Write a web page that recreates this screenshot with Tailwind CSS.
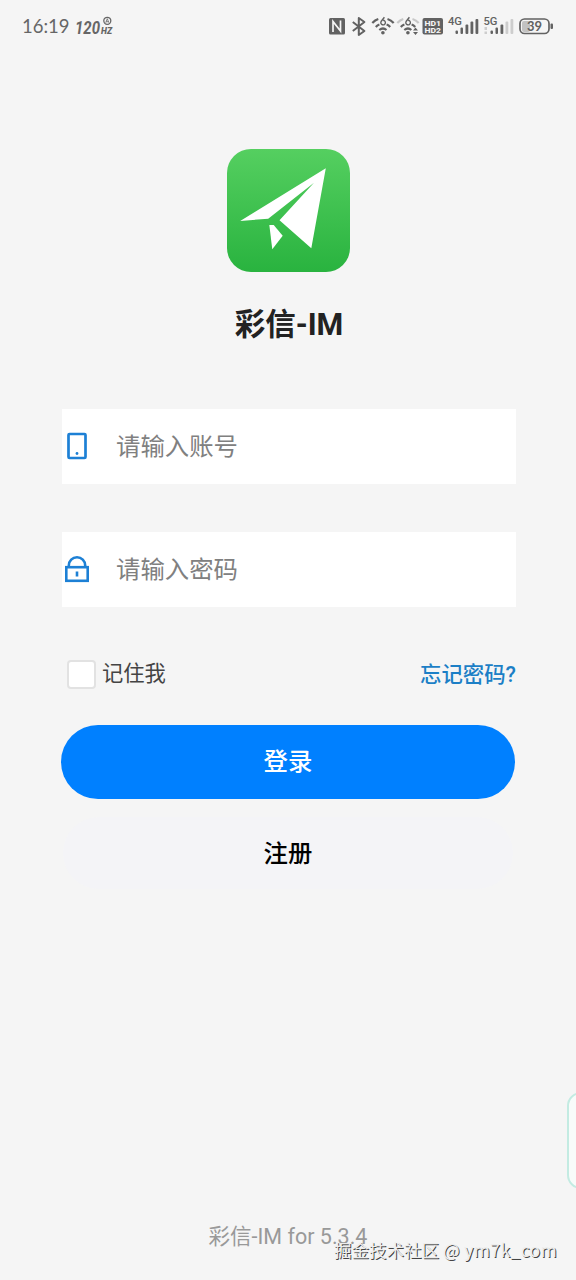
<!DOCTYPE html>
<html lang="zh-CN">
<head>
<meta charset="utf-8">
<meta name="viewport" content="width=device-width, initial-scale=1">
<title>彩信-IM</title>
<script src="https://cdn.jsdelivr.net/npm/@tailwindcss/browser@4"></script>
</head>
<body class="bg-[#f5f5f5]">
<div class="relative flex h-[1280px] w-[576px] flex-col overflow-hidden bg-[#f5f5f5] font-['Roboto','Noto_Sans_CJK_SC',sans-serif]">
  <!-- Status bar -->
  <header class="flex h-[52px] shrink-0 items-center justify-between pr-[22px] pl-[22px] text-[#666]">
    <div class="flex items-center gap-[6px]">
      <span class="w-[47px] font-['Lato',sans-serif] text-[18.500px] leading-none whitespace-nowrap">16:19</span>
      <svg class="h-[22px] w-[40px]" viewBox="0 0 40 22" fill="currentColor" font-family="Roboto, sans-serif">
        <text x="0" y="18.500" font-size="19" font-weight="700" font-style="italic" textLength="25" lengthAdjust="spacingAndGlyphs">120</text>
        <text x="26" y="18.500" font-size="9" font-weight="900" font-style="italic" textLength="11" lengthAdjust="spacingAndGlyphs">HZ</text>
        <circle cx="32.3" cy="5.8" r="3.5" fill="none" stroke="currentColor" stroke-width="1.3"/>
        <path d="M30.7 7.700l1.6-4 1.6 4M31.2 6.700h2.2" fill="none" stroke="currentColor" stroke-width=".8"/>
      </svg>
    </div>
    <svg class="h-[40px] w-[226px]" viewBox="328 5 226 40" fill="none" stroke="#626262" font-family="Roboto, sans-serif">
      <rect x="329" y="17" width="16" height="16.500" rx="1.500" fill="#626262" stroke="none"/>
      <path d="M333 31V20.500l7.500 9.500V19.500" stroke="#f5f5f5" stroke-width="1.700"/>
      <path d="M352.800 21l11.600 9-5.600 4V17l5.600 4-11.600 9" stroke-width="2" stroke-linejoin="round"/>
      <g stroke-width="2.200">
        <path d="M372.300 22q2.800-3 6-4M387.500 18q3.600 1.100 6.200 4M375.800 26q1.800-1.900 3.600-2.500M386.600 23.500q2 .7 3.600 2.500M379.300 29q3.700-3 7.200 0"/>
        <circle cx="382.900" cy="31.800" r="1.800" fill="#626262" stroke="none"/>
        <path d="M397.300 22q2.800-3 6-4M412.500 18q3.600 1.100 6.200 4" stroke="#c8c8c8"/>
        <path d="M400.800 26q1.800-1.900 3.600-2.500M411.600 23.500q2 .7 3.600 2.500M404.300 29q3.700-3 7 0"/>
        <circle cx="407.900" cy="31.800" r="1.800" fill="#626262" stroke="none"/>
      </g>
      <g fill="#626262" stroke="none">
        <path d="M384.400 16.200l-3.300 4.300a2.300 2.300 0 1 0 2-1.200M409.400 16.200l-3.300 4.300a2.300 2.300 0 1 0 2-1.200" fill="none" stroke="#626262" stroke-width="1.400"/>
        <path d="M413 29.500l2.500-3 2.500 3zM413 31l2.500 3 2.500-3z"/>
        <rect x="422.500" y="17" width="20.500" height="16.500" rx="2"/>
        <g fill="#f5f5f5" font-size="8" font-weight="800">
          <text x="424.500" y="24.500" textLength="16.500" lengthAdjust="spacingAndGlyphs">HD1</text>
          <text x="424.500" y="32.200" textLength="16.500" lengthAdjust="spacingAndGlyphs">HD2</text>
        </g>
        <text x="448" y="24" font-size="10" font-weight="500" textLength="14" lengthAdjust="spacingAndGlyphs">4G</text>
        <text x="483.500" y="24" font-size="10" font-weight="500" textLength="14" lengthAdjust="spacingAndGlyphs">5G</text>
        <rect x="455.500" y="29.500" width="2.500" height="3.500" rx="1"/><rect x="460.500" y="26.500" width="2.500" height="6.500" rx="1"/><rect x="465.500" y="23.500" width="2.800" height="9.500" rx="1"/><rect x="470.500" y="20.500" width="2.800" height="12.500" rx="1"/><rect x="475.500" y="18" width="2.800" height="15" rx="1"/>
        <rect x="490.500" y="29.500" width="2.500" height="3.500" rx="1"/><rect x="495.500" y="26.500" width="2.500" height="6.500" rx="1"/><rect x="500.500" y="23.500" width="2.800" height="9.500" rx="1"/>
        <g fill="#cdcdcd"><rect x="484.500" y="26" width="2.500" height="3"/><rect x="484.500" y="30.500" width="2.500" height="2.500"/><rect x="505.500" y="20.500" width="2.800" height="12.500" rx="1"/><rect x="510.500" y="18" width="2.800" height="15" rx="1"/></g>
        <rect x="522" y="20" width="8" height="11" rx="2" fill="#c2c2c2"/>
        <rect x="550.500" y="22.500" width="2.500" height="5.500" rx="1"/>
        <text x="534.500" y="30.200" font-family="Lato, sans-serif" font-size="13.500" font-weight="700" text-anchor="middle" textLength="15" lengthAdjust="spacingAndGlyphs">39</text>
      </g>
      <rect x="520" y="18" width="29" height="14.500" rx="4.500" stroke-width="1.700"/>
    </svg>
  </header>

  <main class="mt-[97px] flex flex-col pr-[60px] pl-[62px]">
    <svg class="ml-[165px] size-[123px]" viewBox="0 0 123 123">
      <defs><linearGradient id="leaf" x1="0" y1="0" x2="0" y2="1"><stop offset="0" stop-color="#55cf60"/><stop offset="1" stop-color="#29b33f"/></linearGradient></defs>
      <rect width="123" height="123" rx="24" fill="url(#leaf)"/>
      <path d="M98.800 19.300L13.200 72l28-2.300L87 33.700 52.500 71.300l31.800 28z" fill="#fff"/>
      <path d="M42.300 76h4.400l9 10.700-10.400 13.600z" fill="#fff"/>
    </svg>
    <h1 class="mt-[32px] h-[42px] text-center text-[30.500px] leading-[42px] font-bold text-[#222]">彩信-IM</h1>

    <div class="mt-[63px] flex h-[75px] items-center bg-white">
      <svg class="mt-[-1px] ml-[3px] h-[30px] w-6" viewBox="0 0 24 30" fill="none" stroke="#1d80d5"><rect x="3.500" y="3" width="17" height="24" rx="1" stroke-width="2.700"/><circle cx="12" cy="22.500" r="1.400" fill="#1d80d5" stroke="none"/></svg>
      <span class="ml-[27px] text-[24.400px] leading-9 text-[#808080]">请输入账号</span>
    </div>
    <div class="mt-12 flex h-[75px] items-center bg-white">
      <svg class="mt-[-1px] ml-[3px] h-[30px] w-6" viewBox="0 0 24 30" fill="none" stroke="#1d80d5" stroke-width="2.600"><rect x="1.300" y="13.200" width="21.400" height="13.600"/><path d="M3.800 13v-1.500a8.200 8.200 0 0 1 16.400 0V13M12 17.500v5"/></svg>
      <span class="ml-[27px] text-[24.400px] leading-9 text-[#808080]">请输入密码</span>
    </div>

    <div class="mt-[50px] flex h-8 items-center justify-between">
      <div class="flex items-center">
        <span class="mt-[3px] ml-[5px] size-[29px] rounded-[4px] border-2 border-[#e2e2e2] bg-white"></span>
        <span class="mt-[2px] ml-[6px] text-[21.300px] leading-8 text-[#444]">记住我</span>
      </div>
      <span class="mt-[3px] text-[21.400px] leading-8 font-medium text-[#1c7fc6]">忘记密码?</span>
    </div>

    <div class="mt-9 -ml-px flex h-[74px] w-[454px] items-center justify-center rounded-full bg-[#0080ff] text-[24.400px] font-medium text-white">登录</div>
    <div class="mt-[18px] ml-px flex h-[72px] w-[450px] items-center justify-center rounded-full bg-[#f4f4f7] pt-[2px] text-[24.400px] font-medium text-black">注册</div>
  </main>

  <footer class="mt-auto mb-[27px] text-center text-[21.500px] leading-8 text-[#999]">彩信-IM for 5.3.4</footer>

  <!-- Overlays: edge handle and watermark -->
  <div class="absolute top-[1092px] left-[567px] h-[97px] w-[40px] rounded-[14px] border-2 border-[#c3ebe2] bg-[#f8fbfa]"></div>
  <div class="absolute top-[1238px] left-[334px] font-['Noto_Sans_CJK_SC',sans-serif] text-[17.500px] leading-6 whitespace-nowrap text-[#eee] [text-shadow:1px_1px_0_#444]">掘金技术社区 <span class="tracking-[0.4px]">@ ym7k_com</span></div>
</div>
</body>
</html>
